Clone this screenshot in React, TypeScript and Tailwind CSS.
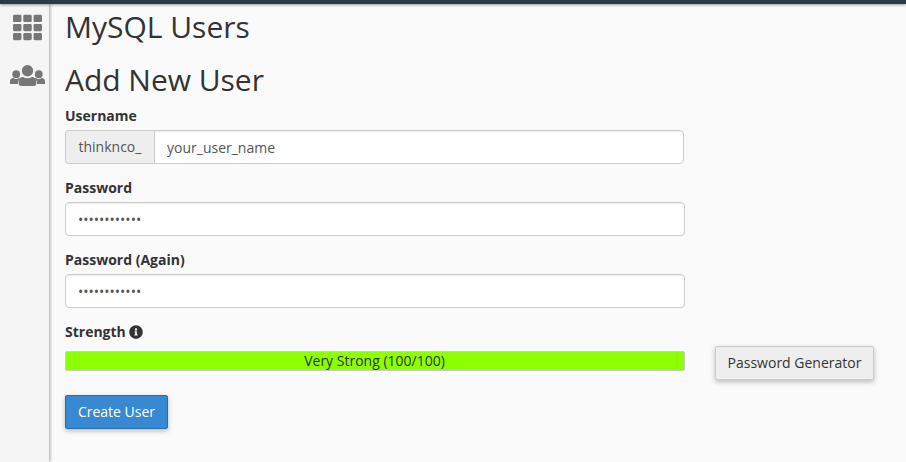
import React from "react";
import { FaTh, FaInfoCircle } from "react-icons/fa";

const field =
  "block h-[34px] border border-[#ccc] bg-white px-3 py-1.5 text-sm leading-5 text-[#555] shadow-[inset_0_1px_1px_rgba(0,0,0,0.075)] outline-none";

function UsersIcon() {
  return (
    <svg viewBox="0 0 35 22" className="ml-[10px] mt-[23px] h-[22px] w-[35px]" fill="currentColor" aria-hidden="true">
      <circle cx="6.2" cy="9.2" r="3.9" />
      <circle cx="28.8" cy="9.2" r="3.9" />
      <path d="M0 19v-2.4C0 14.4 1.3 13 3.3 13c1.9 1.3 4 1.3 5.8 0 .5 0 .9.1 1.3.4C8.8 14.5 8 16.2 7.9 19z" />
      <path d="M35 19v-2.4C35 14.4 33.7 13 31.7 13c-1.9 1.3-4 1.3-5.8 0-.5 0-.9.1-1.3.4 1.6 1.1 2.4 2.8 2.5 5.6z" />
      <circle cx="17.5" cy="5.7" r="5.7" />
      <path d="M8.700 18.500c0-3.800 1.400-6.400 4.300-6.400 2.600 1.600 6.400 1.600 9 0 2.900 0 4.300 2.600 4.300 6.400 0 1.700-1 2.500-2.500 2.500H11.200c-1.500 0-2.500-.8-2.500-2.500z" />
    </svg>
  );
}

function PasswordField({ id, label }: { id: string; label: string }) {
  return (
    <div className="mb-[13px]">
      <label htmlFor={id} className="mb-1 block font-bold">
        {label}
      </label>
      <input id={id} type="password" defaultValue="abcdefghijkl" className={`${field} w-[620px] rounded`} />
    </div>
  );
}

export default function App() {
  return (
    <div className="flex h-[462px] w-[906px] flex-col overflow-hidden bg-[#fafafa] font-['Open_Sans',sans-serif] text-sm leading-5 text-[#333]">
      <header className="z-10 h-1 shrink-0 bg-[#293a4a] shadow-[0_1px_3px_rgba(0,0,0,0.4)]" />
      <div className="flex grow">
        <nav className="mr-px flex w-[49px] shrink-0 flex-col bg-[#f5f5f5] pt-[9px] text-[#777] shadow-[1px_0_3px_rgba(0,0,0,0.35)]">
          <FaTh className="ml-[13px] h-[29px] w-[29px]" />
          <UsersIcon />
        </nav>
        <main className="pl-[15px] pt-1.5">
          <h1 className="mb-5 text-[30px] font-normal leading-[33px]">MySQL Users</h1>
          <h2 className="mb-2.5 text-[30px] font-normal leading-[33px] tracking-[-0.03px]">Add New User</h2>
          <div className="mb-[14px]">
            <label htmlFor="username" className="mb-1 block font-bold">
              Username
            </label>
            <div className="flex">
              <span className="h-[34px] w-[89px] rounded-l border border-r-0 border-[#ccc] bg-[#eee] pl-[12.5px] pt-[6px] text-[#555]">
                thinknco_
              </span>
              <input id="username" type="text" defaultValue="your_user_name" className={`${field} w-[530px] rounded-r`} />
            </div>
          </div>
          <div className="flex flex-col gap-px">
            <PasswordField id="password" label="Password" />
            <PasswordField id="password-again" label="Password (Again)" />
          </div>
          <div className="mt-px flex items-center gap-[3px] font-bold">
            <span>Strength</span>
            <FaInfoCircle className="h-3.5 w-3.5" />
          </div>
          <div className="mt-1 flex items-start gap-[30px]">
            <div className="mt-[5px] flex h-5 w-[620px] items-center justify-center rounded-[2px] border border-[#ccc] bg-[#8cff00] pr-px">
              Very Strong (100/100)
            </div>
            <button className="h-[34px] w-[159px] rounded-[2px] border border-[#ccc] bg-[#eee] shadow-[0_2px_5px_rgba(0,0,0,0.26)]">
              Password Generator
            </button>
          </div>
          <button className="mt-[15px] block h-[34px] w-[103px] rounded-[2px] border border-[#2e6da4] bg-[#3789d1] text-white shadow-[0_2px_5px_rgba(0,0,0,0.26)]">
            Create User
          </button>
        </main>
      </div>
    </div>
  );
}
